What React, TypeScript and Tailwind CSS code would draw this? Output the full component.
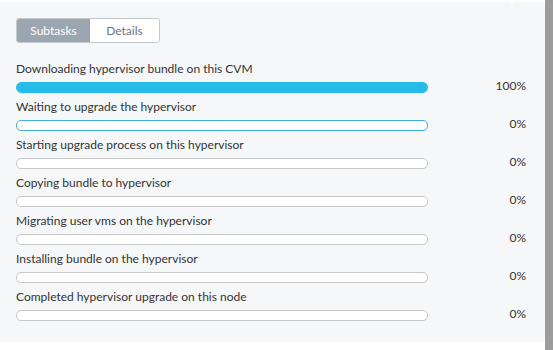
import React from 'react';

const tasks = [
  { label: 'Downloading hypervisor bundle on this CVM', pct: 100 },
  { label: 'Waiting to upgrade the hypervisor', pct: 0, active: true },
  { label: 'Starting upgrade process on this hypervisor', pct: 0 },
  { label: 'Copying bundle to hypervisor', pct: 0 },
  { label: 'Migrating user vms on the hypervisor', pct: 0 },
  { label: 'Installing bundle on the hypervisor', pct: 0 },
  { label: 'Completed hypervisor upgrade on this node', pct: 0 },
];

const TaskRow = ({ label, pct, active }: { label: string; pct: number; active?: boolean }) => (
  <div className="flex flex-col">
    <div className="h-[16px] leading-[16px] text-[12px] text-[#333]">{label}</div>
    <div className="mt-[5px] mb-[6px] flex items-center">
      <div
        className={`w-[412px] h-[11px] rounded-[5px] bg-white overflow-hidden border ${
          pct === 100 ? 'border-[#27bbea]' : active ? 'border-[#3fb0dc]' : 'border-[#c9c9c9]'
        }`}
      >
        <div className="h-full bg-[#27bbea]" style={{ width: `${pct}%` }} />
      </div>
      <div className="w-[98px] text-right text-[12px] text-[#333] leading-[14px] -mt-[3px]">{pct}%</div>
    </div>
  </div>
);

export default function App() {
  return (
    <div className="w-[553px] h-[350px] bg-white flex overflow-hidden" style={{ fontFamily: 'Lato, "Open Sans", sans-serif' }}>
      <div className="w-[545px] h-[342px] bg-[#f6f7f9] mt-[0px] relative">
        {/* popover arrow */}
        <div className="absolute top-0 left-[507px] w-0 h-0 border-l-[5px] border-r-[5px] border-t-[4px] border-l-transparent border-r-transparent border-t-white" />
        <div className="h-[2px] bg-white" />
        <div className="pt-[16px] px-[16px]">
          <div className="flex w-[144px] h-[25px] rounded-[3px] border border-[#c3c8cd] overflow-hidden text-[12px]">
            <div className="w-[73px] bg-[#9ba6b0] text-white flex items-center justify-center">Subtasks</div>
            <div className="flex-1 bg-white text-[#6b7480] flex items-center justify-center">Details</div>
          </div>
          <div className="mt-[18px] flex flex-col">
            {tasks.map((t) => (
              <TaskRow key={t.label} {...t} />
            ))}
          </div>
        </div>
      </div>
      <div className="w-[8px] h-full bg-[#9c9c9c]" />
    </div>
  );
}
